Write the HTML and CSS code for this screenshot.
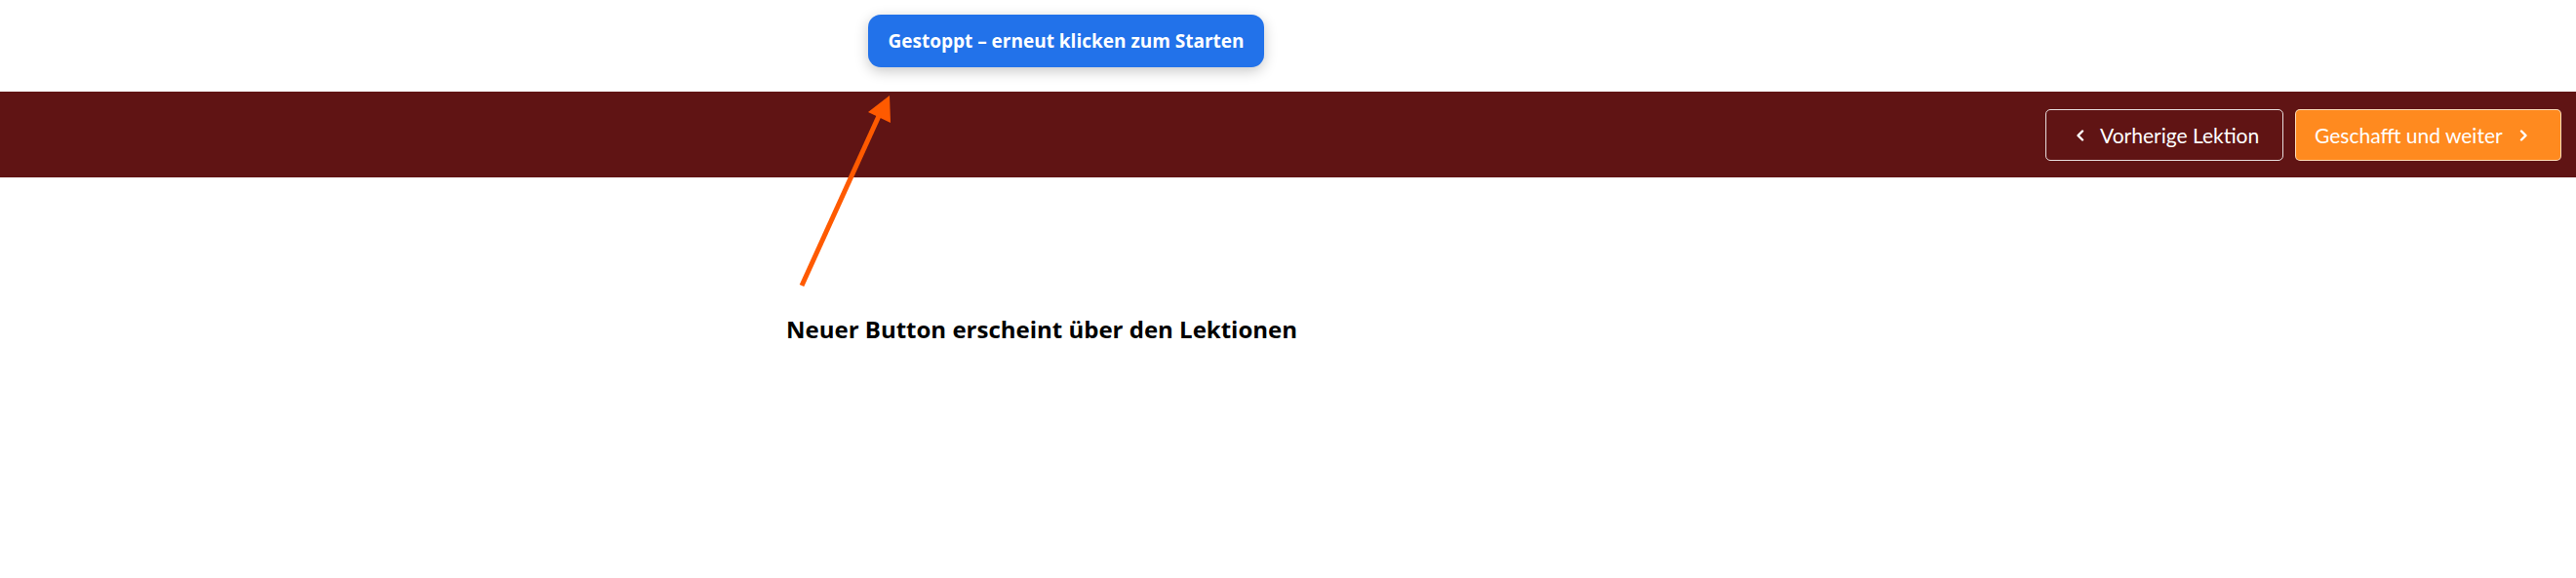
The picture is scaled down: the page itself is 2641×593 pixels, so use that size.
FILE: index.html
```html
<!DOCTYPE html>
<html lang="de">
<head>
<meta charset="utf-8">
<title>Lektion</title>
<link rel="stylesheet" href="styles.css">
</head>
<body>
<div class="top">
  <button class="toggle">Gestoppt – erneut klicken zum Starten</button>
</div>
<nav class="bar">
  <a class="nav-btn prev">
    <svg class="chev" width="9" height="12" viewBox="0 0 9 12"><polyline points="7,1.5 2.5,6 7,10.5" fill="none" stroke="#ffffff" stroke-width="2.4" stroke-linecap="round" stroke-linejoin="round"/></svg>
    <span>Vorherige Lektion</span>
  </a>
  <a class="nav-btn next">
    <span>Geschafft und weiter</span>
    <svg class="chev" width="9" height="12" viewBox="0 0 9 12"><polyline points="2,1.5 6.5,6 2,10.5" fill="none" stroke="#ffffff" stroke-width="2.4" stroke-linecap="round" stroke-linejoin="round"/></svg>
  </a>
</nav>
<svg class="arrow" width="120" height="220" viewBox="0 0 120 220">
  <line x1="22" y1="197" x2="101" y2="23" stroke="#ff5a00" stroke-width="5"/>
  <polygon points="112,2 90,19 113,30" fill="#ff5a00"/>
</svg>
<p class="note">Neuer Button erscheint über den Lektionen</p>
</body>
</html>
```
FILE: styles.css
```css
html, body {
  margin: 0;
  background: #ffffff;
}
body {
  width: 2641px;
  height: 593px;
  position: relative;
  overflow: hidden;
}
.top {
  height: 94px;
  box-sizing: border-box;
  padding: 15px 0 0 890px;
}
.toggle {
  width: 406px;
  height: 54px;
  border: 0;
  border-radius: 13px;
  background: #2272ea;
  color: #ffffff;
  font-family: "Open Sans", "Noto Sans", sans-serif;
  font-weight: 700;
  font-size: 19px;
  box-shadow: 0 4px 14px rgba(0, 0, 0, 0.22);
  padding: 0;
}
.bar {
  height: 88px;
  background: #601414;
  display: flex;
  justify-content: flex-end;
  align-items: center;
  gap: 12px;
  padding-right: 15px;
}
.nav-btn {
  height: 53px;
  box-sizing: border-box;
  display: flex;
  align-items: center;
  border: 1px solid rgba(255, 255, 255, 0.85);
  border-radius: 5px;
  color: #ffffff;
  font-family: "Lato", "Inter", sans-serif;
  font-size: 21px;
  font-weight: 400;
}
.prev {
  width: 244px;
  padding-left: 30px;
  gap: 16px;
  background: transparent;
}
.next {
  width: 273px;
  padding-left: 19px;
  gap: 17px;
  background: #ff8a1f;
  border-color: rgba(255, 230, 200, 0.9);
}
.chev {
  display: block;
  margin-top: 2px;
}
.arrow {
  position: absolute;
  left: 800px;
  top: 96px;
}
.note {
  position: absolute;
  left: 806px;
  top: 321px;
  margin: 0;
  font-family: "Open Sans", "Noto Sans", sans-serif;
  font-weight: 700;
  font-size: 24px;
  color: #000000;
}
```
